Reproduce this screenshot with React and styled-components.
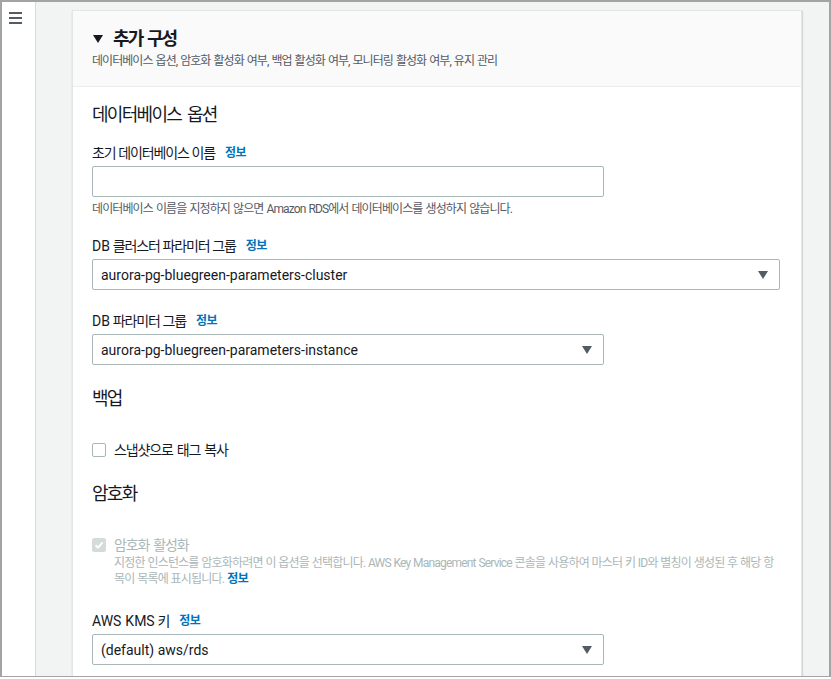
import React from "react";
import styled, { createGlobalStyle } from "styled-components";

const Global = createGlobalStyle`
  html, body { margin: 0; padding: 0; background: #ffffff; }
  body {
    font-family: Roboto, "Noto Sans CJK KR", sans-serif;
    color: #16191f;
    -webkit-font-smoothing: antialiased;
  }
  * { box-sizing: border-box; }
`;

const Frame = styled.div`
  width: 831px;
  height: 677px;
  border: 2px solid #a3a3a3;
  border-bottom-width: 1px;
  display: flex;
  overflow: hidden;
`;

const SideNav = styled.div`
  width: 34px;
  flex: none;
  background: #ffffff;
  border-right: 1px solid #d5dbdb;
  padding: 7px 0 0 7px;
`;

const Main = styled.div`
  flex: 1;
  background: #f2f3f3;
  padding: 8px 29px 0 36px;
`;

const Card = styled.div`
  background: #ffffff;
  border: 1px solid #e3e6e6;
  border-bottom: none;
  box-shadow: 0 1px 1px 0 rgba(0, 28, 36, 0.2), 1px 1px 1px 0 rgba(0, 28, 36, 0.1);
  height: 700px;
`;

const Header = styled.div`
  background: #fafafa;
  border-bottom: 1px solid #eaeded;
  padding: 16px 19px 17px;
`;

const TitleRow = styled.div`
  display: flex;
  align-items: center;
  gap: 10px;
  font-size: 18px;
  font-weight: 700;
  line-height: 24px;
  letter-spacing: -1.9px;
  word-spacing: 2px;
`;

const Caret = styled.span`
  width: 0;
  height: 0;
  border-left: 5px solid transparent;
  border-right: 5px solid transparent;
  border-top: 8px solid #16191f;
  margin-left: 1px;
`;

const Subtitle = styled.div`
  margin-top: 2px;
  font-size: 12px;
  line-height: 16px;
  color: #545b64;
  letter-spacing: -0.95px;
  word-spacing: 1px;
`;

const Body = styled.div`
  padding: 16px 19px 0;
  display: flex;
  flex-direction: column;
`;

const SectionTitle = styled.div`
  font-size: 18px;
  line-height: 24px;
  font-weight: 400;
  letter-spacing: -1.7px;
  word-spacing: 3px;
  margin-top: ${(p) => p.$mt || 0}px;
`;

const Field = styled.div`
  margin-top: ${(p) => p.$mt || 0}px;
  display: flex;
  flex-direction: column;
`;

const Label = styled.div`
  font-size: 14px;
  line-height: 22px;
  display: flex;
  align-items: center;
  gap: 10px;
  padding-top: 2px;
  margin-bottom: 2px;
  letter-spacing: -1.15px;
  word-spacing: 0.5px;
`;

const Latin = styled.span`
  letter-spacing: 0;
`;

const Info = styled.span`
  color: #0073bb;
  font-size: 12px;
  font-weight: 700;
  letter-spacing: -0.5px;
  margin-left: ${(p) => p.$ml || 0}px;
`;

const Input = styled.div`
  width: ${(p) => p.$w}px;
  height: 31px;
  border: 1px solid #aab7b8;
  border-radius: 2px;
  background: #fff;
`;

const Select = styled.div`
  width: ${(p) => p.$w}px;
  height: 31px;
  border: 1px solid #aab7b8;
  border-radius: 2px;
  background: #fff;
  display: flex;
  align-items: center;
  justify-content: space-between;
  padding: 0 11px 0 8px;
  font-size: 14px;
  color: #16191f;
`;

const Arrow = styled.span`
  width: 0;
  height: 0;
  border-left: 5px solid transparent;
  border-right: 5px solid transparent;
  border-top: 8px solid #545b64;
`;

const Help = styled.div`
  margin-top: 4px;
  font-size: 12px;
  line-height: 16px;
  color: #545b64;
  letter-spacing: -0.9px;
  word-spacing: 1px;
`;

const CheckRow = styled.div`
  margin-top: ${(p) => p.$mt || 0}px;
  display: flex;
  align-items: flex-start;
  gap: 8px;
`;

const Box = styled.span`
  flex: none;
  width: 14px;
  height: 14px;
  margin-top: 3px;
  border-radius: 2px;
  border: 1px solid ${(p) => (p.$checked ? "#d5dbdb" : "#aab7b8")};
  background: ${(p) => (p.$checked ? "#d5dbdb" : "#fff")};
  display: flex;
  align-items: center;
  justify-content: center;
`;

const CheckText = styled.div`
  display: flex;
  flex-direction: column;
`;

const CheckLabel = styled.div`
  font-size: 14px;
  line-height: 20px;
  letter-spacing: -1.1px;
  word-spacing: 1.5px;
  color: ${(p) => (p.$disabled ? "#aab7b8" : "#16191f")};
`;

const CheckDesc = styled.div`
  font-size: 12px;
  line-height: 16px;
  color: #aab7b8;
  letter-spacing: -0.8px;
  word-spacing: 0.5px;
  width: 668px;
`;

const Hamburger = () => (
  <svg width="14" height="12" viewBox="0 0 14 12">
    <g stroke="#545b64" strokeWidth="2">
      <line x1="0" y1="1" x2="13" y2="1" />
      <line x1="0" y1="6" x2="13" y2="6" />
      <line x1="0" y1="11" x2="13" y2="11" />
    </g>
  </svg>
);

export default function App() {
  return (
    <>
      <Global />
      <Frame>
        <SideNav>
          <Hamburger />
        </SideNav>
        <Main>
          <Card>
            <Header>
              <TitleRow>
                <Caret />
                <span>추가 구성</span>
              </TitleRow>
              <Subtitle>
                데이터베이스 옵션, 암호화 활성화 여부, 백업 활성화 여부, 모니터링 활성화 여부, 유지 관리
              </Subtitle>
            </Header>
            <Body>
              <SectionTitle>데이터베이스 옵션</SectionTitle>
              <Field $mt={13}>
                <Label>
                  초기 데이터베이스 이름 <Info>정보</Info>
                </Label>
                <Input $w={512} />
                <Help>데이터베이스 이름을 지정하지 않으면 Amazon RDS에서 데이터베이스를 생성하지 않습니다.</Help>
              </Field>
              <Field $mt={16}>
                <Label>
                  <span>
                    <Latin>DB</Latin> 클러스터 파라미터 그룹
                  </span>
                  <Info>정보</Info>
                </Label>
                <Select $w={688}>
                  aurora-pg-bluegreen-parameters-cluster
                  <Arrow />
                </Select>
              </Field>
              <Field $mt={18}>
                <Label>
                  <span>
                    <Latin>DB</Latin> 파라미터 그룹
                  </span>
                  <Info>정보</Info>
                </Label>
                <Select $w={512}>
                  aurora-pg-bluegreen-parameters-instance
                  <Arrow />
                </Select>
              </Field>
              <SectionTitle $mt={22}>백업</SectionTitle>
              <CheckRow $mt={29}>
                <Box />
                <CheckLabel>스냅샷으로 태그 복사</CheckLabel>
              </CheckRow>
              <SectionTitle $mt={22}>암호화</SectionTitle>
              <CheckRow $mt={29}>
                <Box $checked>
                  <svg width="10" height="10" viewBox="0 0 10 10">
                    <path d="M1.5 5.2 L4 7.6 L8.6 2.4" fill="none" stroke="#fff" strokeWidth="2" />
                  </svg>
                </Box>
                <CheckText>
                  <CheckLabel $disabled>암호화 활성화</CheckLabel>
                  <CheckDesc>
                    지정한 인스턴스를 암호화하려면 이 옵션을 선택합니다. AWS Key Management Service 콘솔을 사용하여 마스터 키 ID와 별칭이 생성된 후 해당 항목이 목록에 표시됩니다.
                    <Info $ml={3}>정보</Info>
                  </CheckDesc>
                </CheckText>
              </CheckRow>
              <Field $mt={21}>
                <Label>
                  <span>
                    <Latin>AWS KMS</Latin> 키
                  </span>
                  <Info>정보</Info>
                </Label>
                <Select $w={512}>
                  (default) aws/rds
                  <Arrow />
                </Select>
              </Field>
            </Body>
          </Card>
        </Main>
      </Frame>
    </>
  );
}
